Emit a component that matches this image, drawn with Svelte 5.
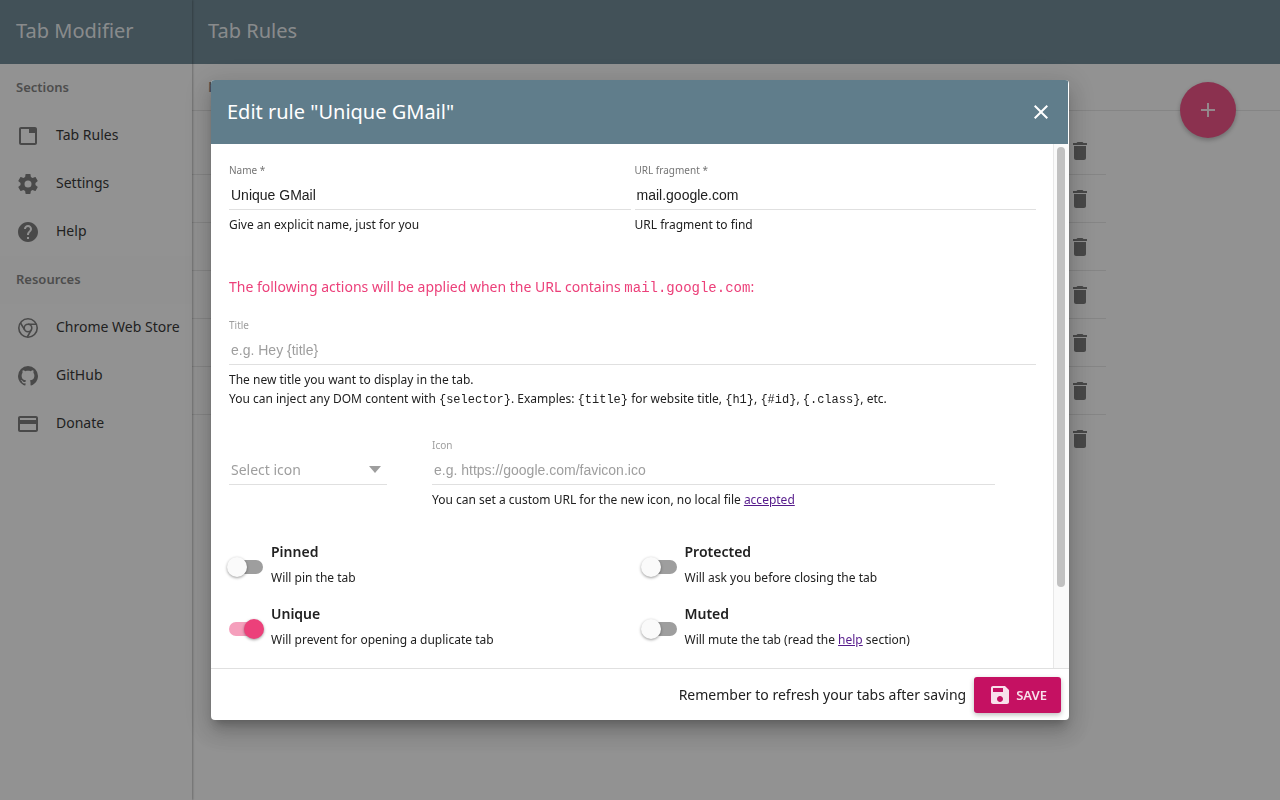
<script>
  const icons = {
    tab: 'M19 3H5c-1.100 0-2 .9-2 2v14c0 1.100.9 2 2 2h14c1.100 0 2-.9 2-2V5c0-1.100-.9-2-2-2zm0 16H5V5h8v4h6v10z',
    settings: 'M12,15.5A3.5,3.5 0 0,1 8.5,12A3.5,3.5 0 0,1 12,8.500A3.5,3.5 0 0,1 15.5,12A3.5,3.5 0 0,1 12,15.5M19.43,12.97C19.47,12.65 19.5,12.33 19.5,12C19.5,11.67 19.47,11.34 19.43,11L21.54,9.37C21.73,9.22 21.78,8.95 21.66,8.73L19.66,5.27C19.54,5.05 19.27,4.96 19.05,5.05L16.56,6.05C16.04,5.66 15.5,5.32 14.87,5.07L14.5,2.42C14.46,2.18 14.25,2 14,2H10C9.75,2 9.54,2.18 9.5,2.42L9.13,5.07C8.5,5.32 7.96,5.66 7.44,6.05L4.95,5.05C4.73,4.96 4.46,5.05 4.34,5.27L2.34,8.73C2.21,8.95 2.27,9.22 2.46,9.37L4.57,11C4.53,11.34 4.5,11.67 4.5,12C4.5,12.33 4.53,12.65 4.57,12.97L2.46,14.63C2.27,14.78 2.21,15.05 2.34,15.27L4.34,18.73C4.46,18.95 4.73,19.03 4.95,18.95L7.44,17.94C7.96,18.34 8.5,18.68 9.13,18.93L9.5,21.58C9.54,21.82 9.75,22 10,22H14C14.25,22 14.46,21.82 14.5,21.58L14.87,18.93C15.5,18.67 16.04,18.34 16.56,17.94L19.05,18.95C19.27,19.03 19.54,18.95 19.66,18.73L21.66,15.27C21.78,15.05 21.73,14.78 21.54,14.63L19.43,12.97Z',
    help: 'M12 2C6.480 2 2 6.480 2 12s4.480 10 10 10 10-4.480 10-10S17.520 2 12 2zm1 17h-2v-2h2v2zm2.070-7.750l-.9.920C13.450 12.900 13 13.500 13 15h-2v-.5c0-1.100.450-2.100 1.170-2.830l1.240-1.260c.370-.360.590-.860.590-1.410 0-1.100-.9-2-2-2s-2 .9-2 2H8c0-2.210 1.790-4 4-4s4 1.790 4 4c0 .880-.360 1.680-.930 2.250z',
    github: 'M12 2A10 10 0 0 0 2 12c0 4.420 2.870 8.170 6.840 9.500.5.080.660-.230.660-.5v-1.690c-2.770.6-3.360-1.340-3.360-1.340-.460-1.160-1.110-1.470-1.110-1.470-.910-.620.070-.6.070-.6 1 .070 1.530 1.030 1.530 1.030.870 1.520 2.340 1.070 2.910.830.090-.650.350-1.090.630-1.340-2.220-.250-4.550-1.110-4.550-4.920 0-1.110.380-2 1.030-2.710-.1-.250-.450-1.290.1-2.640 0 0 .840-.270 2.750 1.020.790-.220 1.650-.330 2.500-.330.850 0 1.710.110 2.500.330 1.910-1.290 2.750-1.020 2.750-1.020.550 1.350.2 2.390.1 2.640.650.710 1.030 1.600 1.030 2.710 0 3.820-2.340 4.660-4.570 4.910.360.310.690.920.690 1.850V21c0 .270.160.590.670.5C19.140 20.160 22 16.420 22 12A10 10 0 0 0 12 2z',
    card: 'M20 4H4c-1.110 0-1.990.890-1.990 2L2 18c0 1.110.890 2 2 2h16c1.110 0 2-.890 2-2V6c0-1.110-.890-2-2-2zm0 14H4v-6h16v6zm0-10H4V6h16v2z'
  };

  const sections = [
    { label: 'Tab Rules', icon: 'tab' },
    { label: 'Settings', icon: 'settings' },
    { label: 'Help', icon: 'help' }
  ];
  const resources = [
    { label: 'Chrome Web Store', icon: 'chrome' },
    { label: 'GitHub', icon: 'github' },
    { label: 'Donate', icon: 'card' }
  ];
  const rules = [1, 2, 3, 4, 5, 6, 7];

  let name = $state('Unique GMail');
  let fragment = $state('mail.google.com');
  let title = $state('');
  let icon = $state('');
  let toggles = $state([
    { id: 'pinned', label: 'Pinned', text: 'Will pin the tab', on: false },
    { id: 'protected', label: 'Protected', text: 'Will ask you before closing the tab', on: false },
    { id: 'unique', label: 'Unique', text: 'Will prevent for opening a duplicate tab', on: true },
    { id: 'muted', label: 'Muted', text: 'Will mute the tab (read the ', link: 'help', after: ' section)', on: false }
  ]);
</script>

{#snippet navItem(item)}
  <a class="nav-item" href="#{item.icon}">
    <svg viewBox="0 0 24 24" aria-hidden="true">
      {#if item.icon === 'chrome'}
        <g fill="none" stroke="currentColor" stroke-width="1.6">
          <circle cx="12" cy="12" r="9.2" />
          <circle cx="12" cy="12" r="3.800" />
          <path d="M12 8.200h8.200M8.700 13.900 4.500 7M15.300 13.900 11.300 21" />
        </g>
      {:else}
        <path d={icons[item.icon]} />
      {/if}
    </svg>
    <span>{item.label}</span>
  </a>
{/snippet}

<div class="app">
  <aside>
    <div class="bar"><h1>Tab Modifier</h1></div>
    <nav>
      <h2>Sections</h2>
      {#each sections as item}{@render navItem(item)}{/each}
      <h2 class="shade">Resources</h2>
      {#each resources as item}{@render navItem(item)}{/each}
    </nav>
  </aside>
  <main>
    <div class="bar"><h1>Tab Rules</h1></div>
    <div class="list-head">Name</div>
    <ul>
      {#each rules as rule}
        <li>
          <button class="trash" aria-label="Delete rule {rule}">
            <svg viewBox="0 0 24 24" aria-hidden="true"><path d="M6 19c0 1.100.9 2 2 2h8c1.100 0 2-.9 2-2V7H6v12zM19 4h-3.500l-1-1h-5l-1 1H5v2h14V4z" /></svg>
          </button>
        </li>
      {/each}
    </ul>
    <button class="fab" aria-label="Add rule">
      <svg viewBox="0 0 24 24" aria-hidden="true"><path d="M19 13h-6v6h-2v-6H5v-2h6V5h2v6h6v2z" /></svg>
    </button>
  </main>
</div>

<div class="backdrop">
  <form class="dialog" role="dialog" aria-labelledby="dialog-title">
    <header>
      <h2 id="dialog-title">Edit rule "Unique GMail"</h2>
      <button type="button" class="close" aria-label="Close">
        <svg viewBox="0 0 24 24" aria-hidden="true"><path d="M19 6.410L17.590 5 12 10.590 6.410 5 5 6.410 10.590 12 5 17.590 6.410 19 12 13.410 17.590 19 19 17.590 13.410 12z" /></svg>
      </button>
    </header>

    <div class="scroller">
      <div class="content">
        <div class="pair">
          <div class="field">
            <label for="name">Name *</label>
            <input id="name" type="text" bind:value={name} />
            <p class="hint">Give an explicit name, just for you</p>
          </div>
          <div class="field">
            <label for="fragment">URL fragment *</label>
            <input id="fragment" type="text" bind:value={fragment} />
            <p class="hint">URL fragment to find</p>
          </div>
        </div>

        <p class="notice">The following actions will be applied when the URL contains <code>{fragment}</code>:</p>

        <div class="field">
          <label class="soft" for="title">Title</label>
          <input id="title" type="text" placeholder={'e.g. Hey {title}'} bind:value={title} />
          <p class="hint">
            The new title you want to display in the tab.<br />
            You can inject any DOM content with <code>{'{selector}'}</code>. Examples: <code>{'{title}'}</code> for website title, <code>{'{h1}'}</code>, <code>{'{#id}'}</code>, <code>{'{.class}'}</code>, etc.
          </p>
        </div>

        <div class="icon-row">
          <div class="select">
            <select aria-label="Select icon"><option>Select icon</option></select>
            <svg viewBox="0 0 12 7" aria-hidden="true"><path d="M0 0h12L6 7z" /></svg>
          </div>
          <div class="field">
            <label class="soft" for="icon">Icon</label>
            <input id="icon" type="text" placeholder="e.g. https://google.com/favicon.ico" bind:value={icon} />
            <p class="hint">You can set a custom URL for the new icon, no local file <a href="#accepted">accepted</a></p>
          </div>
        </div>

        <div class="toggles">
          {#each toggles as t}
            <div class="toggle">
              <input id={t.id} type="checkbox" role="switch" bind:checked={t.on} />
              <div>
                <label for={t.id}>{t.label}</label>
                <p>{t.text}{#if t.link}<a href="#help">{t.link}</a>{t.after}{/if}</p>
              </div>
            </div>
          {/each}
        </div>
      </div>
      <div class="track" aria-hidden="true"><div class="thumb"></div></div>
    </div>

    <footer>
      <span>Remember to refresh your tabs after saving</span>
      <button type="button" class="save">
        <svg viewBox="0 0 24 24" aria-hidden="true"><path d="M17 3H5c-1.110 0-2 .9-2 2v14c0 1.100.890 2 2 2h14c1.100 0 2-.9 2-2V7l-4-4zm-5 16c-1.660 0-3-1.340-3-3s1.340-3 3-3 3 1.340 3 3-1.340 3-3 3zm3-10H5V5h10v4z" /></svg>
        SAVE
      </button>
    </footer>
  </form>
</div>

<style>
  :global(body) {
    margin: 0;
    background: #fafafa;
    color: #212121;
    font-family: "Noto Sans", "Open Sans", sans-serif;
    font-size: 14px;
  }
  * { box-sizing: border-box; }
  h1, h2, p, ul { margin: 0; padding: 0; }
  button { border: 0; padding: 0; background: none; font: inherit; color: inherit; }
  svg { display: block; fill: currentColor; flex: none; }
  code { font-family: "Liberation Mono", monospace; }
  a { color: #551a8b; }

  .app { display: flex; min-height: 100vh; }
  aside { width: 192px; flex: none; box-shadow: 1px 0 2px rgba(0, 0, 0, 0.3); z-index: 1; }
  main { flex: 1; position: relative; }
  .bar { height: 64px; padding: 0 16px 2px; display: flex; align-items: center; background: #607d8b; color: rgba(255, 255, 255, 0.87); }
  .bar h1 { font-size: 20px; line-height: 24px; font-weight: 400; }

  nav h2 { height: 48px; padding: 0 16px; line-height: 46px; font-size: 13px; font-weight: 600; color: #757575; }
  nav h2.shade { background: #f7f7f7; }
  .nav-item { display: flex; align-items: center; gap: 16px; height: 48px; padding: 0 16px; color: #212121; text-decoration: none; white-space: nowrap; }
  .nav-item svg { width: 24px; height: 24px; color: #6e6e6e; }
  .nav-item span { padding-bottom: 4px; }

  .list-head { height: 47px; padding: 0 16px; line-height: 46px; font-weight: 600; color: #757575; border-bottom: 1px solid #e0e0e0; }
  ul { list-style: none; width: 84%; margin-top: 16px; }
  li { display: flex; align-items: center; justify-content: flex-end; height: 48px; padding-right: 14px; border-bottom: 1px solid #e0e0e0; }
  li:last-child { border-bottom: 0; }
  .trash svg { width: 24px; height: 24px; color: #6e6e6e; }
  .fab { position: absolute; right: 44px; top: 82px; width: 56px; height: 56px; border-radius: 50%; display: grid; place-items: center; background: #ec407a; color: rgba(255, 255, 255, 0.87); box-shadow: 0 2px 5px rgba(0, 0, 0, 0.3); }
  .fab svg { width: 24px; height: 24px; }

  .backdrop { position: fixed; inset: 0; z-index: 2; display: flex; align-items: center; justify-content: center; background: rgba(33, 33, 33, 0.48); }
  .dialog { display: flex; flex-direction: column; width: 90%; max-width: 858px; max-height: 80%; background: #fff; border-radius: 4px; overflow: hidden; box-shadow: 0 7px 8px -4px rgba(0, 0, 0, 0.2), 0 13px 19px 2px rgba(0, 0, 0, 0.14), 0 5px 24px 4px rgba(0, 0, 0, 0.12); }
  header { height: 64px; flex: none; display: flex; align-items: center; justify-content: space-between; padding: 0 15px 0 16px; background: #607d8b; border-right: 1px solid #fff; color: #fff; }
  header h2 { font-size: 20px; line-height: 24px; font-weight: 400; }
  .close svg { width: 24px; height: 24px; }

  .scroller { flex: 1; min-height: 0; display: flex; overflow: hidden; }
  .content { flex: 1; padding: 16px 17px 0 18px; overflow: auto; scrollbar-width: none; }
  .track { width: 16px; padding: 3px; background: #fafafa; border-left: 1px solid #e8e8e8; }
  .thumb { width: 8px; height: 85%; border-radius: 4px; background: #c1c1c1; }

  .pair { display: grid; grid-template-columns: 1fr 1fr; gap: 4px; }
  .field { display: flex; flex-direction: column; }
  .field label { font-size: 10px; line-height: 20px; color: #757575; }
  .field label.soft { color: #9e9e9e; }
  .field input { width: 100%; height: 30px; padding: 2px; border: 0; border-bottom: 1px solid #e0e0e0; outline: 0; background: none; color: #212121; font: 14px "Liberation Sans", Arial, sans-serif; }
  .field input::placeholder { color: #9e9e9e; opacity: 1; }
  .hint { padding-top: 5px; font-size: 12px; line-height: 19px; }
  .notice { margin: 43px 0 17px; font-size: 14px; line-height: 20px; color: #ec407a; }

  .icon-row { display: grid; grid-template-columns: 158px 563px; gap: 45px; margin-top: 25px; }
  .select { display: flex; align-items: center; align-self: start; height: 30px; margin-top: 20px; padding-right: 6px; border-bottom: 1px solid #e0e0e0; color: #9e9e9e; }
  .select select { flex: 1; appearance: none; border: 0; padding: 0 2px; background: none; color: inherit; font: inherit; }
  .select svg { width: 12px; height: 7px; }

  .toggles { display: grid; grid-template-columns: 1fr 1fr; gap: 10px 20px; padding: 30px 0 42px; }
  .toggle { display: flex; align-items: center; gap: 8px; }
  .toggle label { display: block; font-weight: 600; line-height: 26px; }
  .toggle p { font-size: 12px; line-height: 26px; }
  .toggle input { appearance: none; flex: none; width: 34px; height: 14px; margin: 4px 0 0; border-radius: 7px; background: #9e9e9e; display: flex; align-items: center; }
  .toggle input::before { content: ''; flex: none; width: 20px; height: 20px; margin-left: -2px; border-radius: 50%; background: #fafafa; box-shadow: 0 1px 3px rgba(0, 0, 0, 0.4); }
  .toggle input:checked { background: #f59fbc; }
  .toggle input:checked::before { margin-left: 15px; background: #ec407a; }

  footer { flex: none; height: 52px; display: flex; align-items: center; justify-content: flex-end; gap: 8px; padding: 0 8px; border-top: 1px solid #e0e0e0; }
  .save { display: flex; align-items: center; gap: 4px; height: 36px; padding: 0 14px; border-radius: 3px; background: #c51162; color: rgba(255, 255, 255, 0.87); font-size: 13px; font-weight: 600; box-shadow: 0 2px 5px rgba(0, 0, 0, 0.26); }
  .save svg { width: 24px; height: 24px; }
</style>
